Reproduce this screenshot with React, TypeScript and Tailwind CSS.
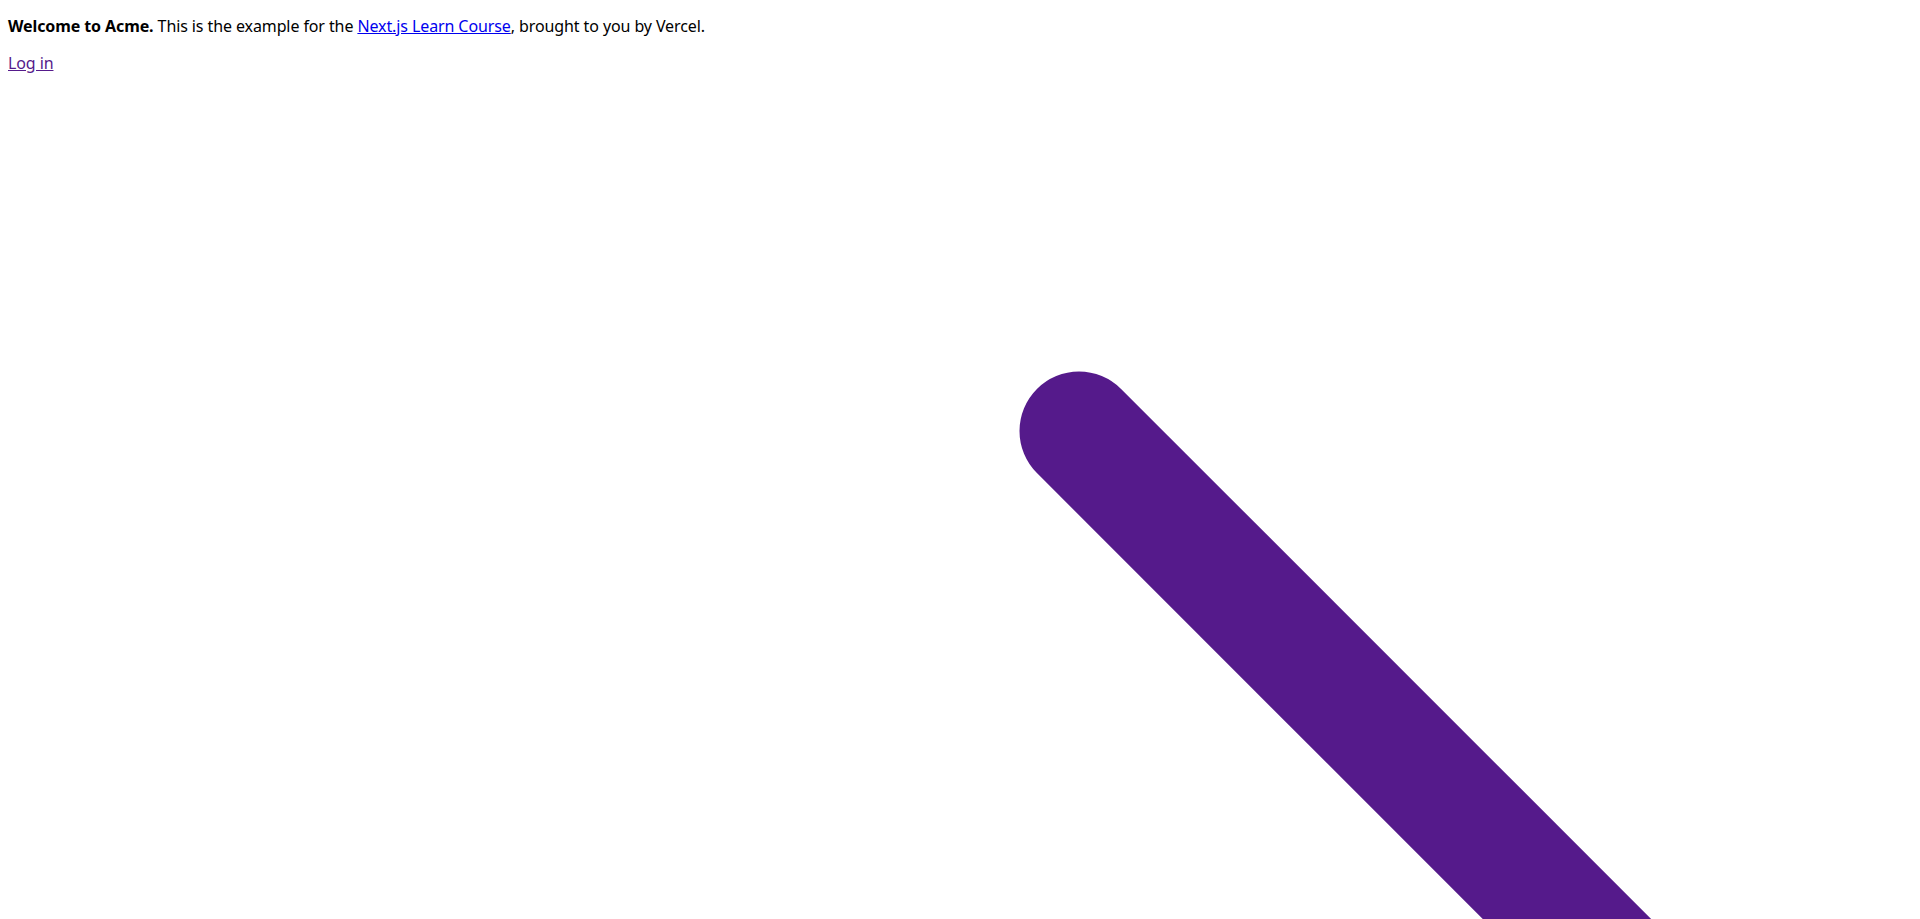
export default function App() {
  return (
    <main className="min-h-screen bg-white px-2 pb-2 font-['Noto_Sans',sans-serif] text-[16px] leading-[21px] tracking-[-0.1px] text-black">
      <p className="mb-4 pt-4">
        <strong className="font-bold">Welcome to Acme.</strong> This is the example for the{" "}
        <a href="#" className="text-[#0000ee] underline">
          Next.js Learn Course
        </a>
        , brought to you by Vercel.
      </p>
      <a href="#" className="text-[#551a8b] underline">
        <span>Log in</span>{" "}
        <svg
          fill="none"
          viewBox="0 0 24 24"
          strokeWidth={1.5}
          stroke="currentColor"
          className="block h-[1904px] w-[1904px]"
        >
          <path strokeLinecap="round" strokeLinejoin="round" d="M13.5 4.5 21 12m0 0-7.5 7.5M21 12H3" />
        </svg>
      </a>
    </main>
  )
}
